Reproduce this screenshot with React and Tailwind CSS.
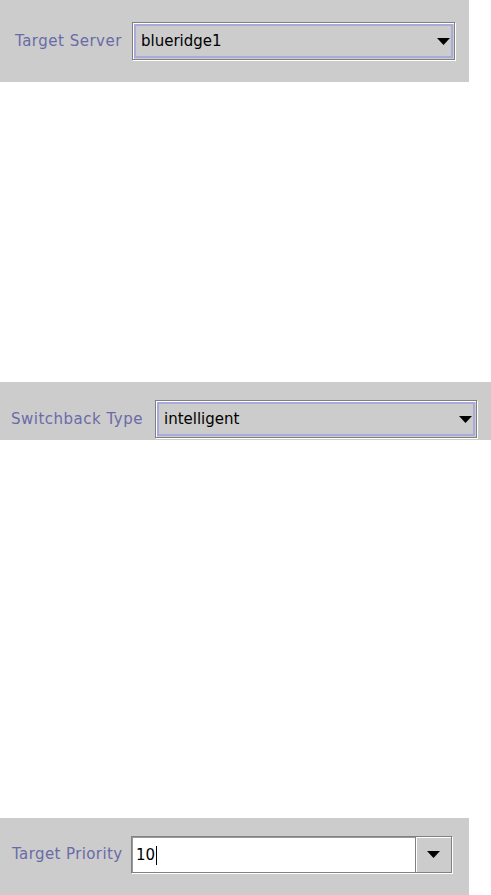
import React from 'react';

const Arrow = () => (
    <svg width="13" height="7" viewBox="0 0 13 7" className="block">
        <path d="M0 0 H13 L6.5 7 Z" fill="#000" />
    </svg>
);

// Metal-style combo box with focus ring
const Combo = ({ value, width }) => (
    <div className={`border border-[#808080] shadow-[1px_1px_0_#fff,inset_1px_1px_0_#fff] p-px ${width}`}>
        <div className="h-[34px] border-2 border-[#a9a9dc] bg-[#cccccc] flex items-center pl-[5px] pr-[1px]">
            <span className="flex-1 text-[15px] text-black">{value}</span>
            <Arrow />
        </div>
    </div>
);

const EditableCombo = ({ value }) => (
    <div className="w-[321px] h-[37px] border border-[#808080] shadow-[1px_1px_0_#fff] flex">
        <div className="flex-1 bg-white border-t border-l border-[#9a9a9a] flex items-center pl-[3px] text-[15px] text-black">
            <span>{value}</span>
            <span className="w-px h-[19px] bg-black ml-px" />
        </div>
        <div className="w-[36px] bg-[#cccccc] border-l border-[#808080] shadow-[inset_1px_1px_0_#fff] flex items-center justify-center">
            <Arrow />
        </div>
    </div>
);

const App = () => {
    return (
        <div className="w-[491px] h-[895px] bg-white overflow-hidden" style={{ fontFamily: '"DejaVu Sans", sans-serif' }}>
            <div className="w-[469px] h-[82px] bg-[#cccccc] flex items-center pl-[15px]">
                <span className="w-[117px] text-[15px] tracking-[0.5px] text-[#6a6aa8]">Target Server</span>
                <Combo value="blueridge1" width="w-[323px]" />
            </div>

            <div className="h-[300px]" />

            <div className="w-[491px] h-[58px] bg-[#cccccc] flex items-end pl-[11px] pb-[2px]">
                <div className="flex items-center">
                    <span className="w-[144px] text-[15px] tracking-[0.5px] text-[#6a6aa8]">Switchback Type</span>
                    <Combo value="intelligent" width="w-[322px]" />
                </div>
            </div>

            <div className="h-[378px]" />

            <div className="w-[469px] h-[77px] bg-[#cccccc] flex items-start pt-[18px] pl-[12px]">
                <div className="flex items-center">
                    <span className="w-[119px] text-[15px] tracking-[0.4px] text-[#6a6aa8]">Target Priority</span>
                    <EditableCombo value="10" />
                </div>
            </div>
        </div>
    );
};

export default App;
